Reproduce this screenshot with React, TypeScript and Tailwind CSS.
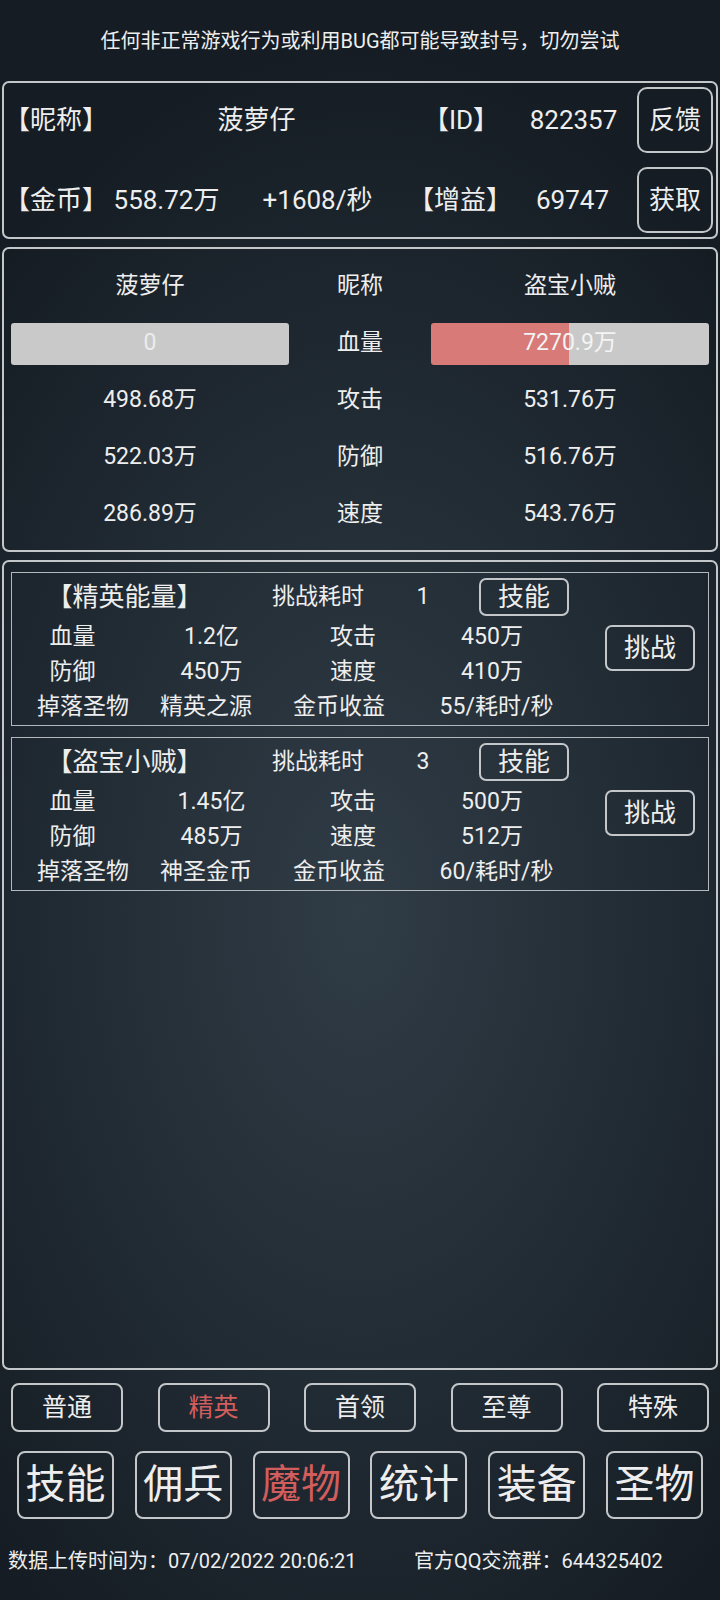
import { Fragment } from 'react'
import type React from 'react'

// 枠線の色
const line = 'border-[#c3c7ca]'

const TopCell = ({ w, children }: { w: string; children: React.ReactNode }) => (
  <span className={`${w} shrink-0 text-center whitespace-nowrap`}>{children}</span>
)

type Monster = {
  name: string
  cost: string
  hp: string
  atk: string
  def: string
  spd: string
  drop: string
  income: string
}

const monsters: Monster[] = [
  { name: '【精英能量】', cost: '1', hp: '1.2亿', atk: '450万', def: '450万', spd: '410万', drop: '精英之源', income: '55/耗时/秒' },
  { name: '【盗宝小贼】', cost: '3', hp: '1.45亿', atk: '500万', def: '485万', spd: '512万', drop: '神圣金币', income: '60/耗时/秒' },
]

const MonsterCard = ({ m }: { m: Monster }) => (
  <div className="h-[154px] border-[1.5px] border-[#b3b8bc]">
    {/* 1行目：名前・耗时・技能 */}
    <div className="flex items-center h-[38px] mt-[5px] whitespace-nowrap">
      <span className="w-[225px] text-center text-[26px]">{m.name}</span>
      <span className="w-[162px] text-center text-[23px]">挑战耗时</span>
      <span className="w-[48px] text-center text-[23px]">{m.cost}</span>
      <button
        type="button"
        className={`ml-[32px] w-[90px] h-[38px] border-2 ${line} rounded-[7px] text-[26px] leading-none flex items-center justify-center`}
      >
        技能
      </button>
    </div>
    <div className="flex items-start mt-[4px]">
      <div className="w-[561px] text-[23px] whitespace-nowrap">
        <div className="flex items-center h-[35px]">
          <span className="w-[121px] text-center">血量</span>
          <span className="w-[157px] text-center">{m.hp}</span>
          <span className="w-[126px] text-center">攻击</span>
          <span className="w-[152px] text-center">{m.atk}</span>
        </div>
        <div className="flex items-center h-[35px]">
          <span className="w-[121px] text-center">防御</span>
          <span className="w-[157px] text-center">{m.def}</span>
          <span className="w-[126px] text-center">速度</span>
          <span className="w-[152px] text-center">{m.spd}</span>
        </div>
        <div className="flex items-center h-[35px]">
          <span className="w-[142px] text-center">掉落圣物</span>
          <span className="w-[104px] text-center">{m.drop}</span>
          <span className="w-[162px] text-center">金币收益</span>
          <span className="w-[153px] text-center">{m.income}</span>
        </div>
      </div>
      <button
        type="button"
        className={`mt-[5px] ml-[32px] w-[90px] h-[46px] border-2 ${line} rounded-[7px] text-[26px] leading-none flex items-center justify-center`}
      >
        挑战
      </button>
    </div>
  </div>
)

const stats = [
  { left: '498.68万', label: '攻击', right: '531.76万' },
  { left: '522.03万', label: '防御', right: '516.76万' },
  { left: '286.89万', label: '速度', right: '543.76万' },
]

const modes = ['普通', '精英', '首领', '至尊', '特殊']
const menus = ['技能', '佣兵', '魔物', '统计', '装备', '圣物']

export default function App() {
  return (
    <main className="w-[720px] min-h-[1600px] flex flex-col text-[#eeeeee] font-['Roboto','Noto_Sans_CJK_SC',sans-serif] bg-[radial-gradient(ellipse_75%_55%_at_50%_57%,#303c46_0%,#222c35_52%,#151c23_100%)]">
      <div className="h-[81px] flex items-center justify-center text-[20px]">
        任何非正常游戏行为或利用BUG都可能导致封号，切勿尝试
      </div>

      {/* プレイヤー情報 */}
      <section className={`mx-[2px] h-[158px] border-2 ${line} rounded-[7px] flex flex-col gap-[14px] pt-[4px] text-[26px]`}>
        <div className="flex items-center h-[66px]">
          <TopCell w="w-[100px]">【昵称】</TopCell>
          <TopCell w="w-[305px]">菠萝仔</TopCell>
          <TopCell w="w-[104px]">【ID】</TopCell>
          <TopCell w="w-[121px]">822357</TopCell>
          <button
            type="button"
            className={`ml-[3px] w-[76px] h-[66px] border-2 ${line} rounded-[10px] flex items-center justify-center leading-none`}
          >
            反馈
          </button>
        </div>
        <div className="flex items-center h-[66px]">
          <TopCell w="w-[100px]">【金币】</TopCell>
          <TopCell w="w-[125px]">558.72万</TopCell>
          <TopCell w="w-[177px]">+1608/秒</TopCell>
          <TopCell w="w-[108px]">【增益】</TopCell>
          <TopCell w="w-[117px]">69747</TopCell>
          <button
            type="button"
            className={`ml-[6px] w-[76px] h-[66px] border-2 ${line} rounded-[10px] flex items-center justify-center leading-none`}
          >
            获取
          </button>
        </div>
      </section>

      {/* 対戦ステータス */}
      <section className={`mt-[8px] mx-[2px] h-[305px] border-2 ${line} rounded-[7px] px-[7px] pt-[9px]`}>
        <div className="grid grid-cols-[278px_142px_278px] auto-rows-[57px] items-center text-center text-[23px] whitespace-nowrap">
          <span>菠萝仔</span>
          <span>昵称</span>
          <span>盗宝小贼</span>

          <div className="h-[42px] rounded-[3px] bg-[#c9c9c9] flex items-center justify-center text-[#ececec]">0</div>
          <span>血量</span>
          <div className="h-[42px] rounded-[3px] bg-[linear-gradient(to_right,#d77a78_49.6%,#c9c9c9_49.6%)] flex items-center justify-center text-[#f4f4f4]">
            7270.9万
          </div>

          {stats.map((s) => (
            <Fragment key={s.label}>
              <span>{s.left}</span>
              <span>{s.label}</span>
              <span>{s.right}</span>
            </Fragment>
          ))}
        </div>
      </section>

      {/* 魔物リスト */}
      <section className={`mt-[8px] mx-[2px] h-[810px] border-2 ${line} rounded-[7px] px-[7px] pt-[10px] flex flex-col gap-[11px]`}>
        {monsters.map((m) => (
          <MonsterCard key={m.name} m={m} />
        ))}
      </section>

      <div className="mt-[13px] px-[11px] flex justify-between">
        {modes.map((t) => (
          <button
            key={t}
            type="button"
            className={`w-[112px] h-[49px] border-2 ${line} rounded-[8px] text-[25px] leading-none flex items-center justify-center ${
              t === '精英' ? 'text-[#d25d5d]' : ''
            }`}
          >
            {t}
          </button>
        ))}
      </div>

      <div className="mt-[19px] px-[17px] flex justify-between">
        {menus.map((t) => (
          <button
            key={t}
            type="button"
            className={`w-[97px] h-[68px] border-2 ${line} rounded-[8px] text-[40px] leading-none flex items-center justify-center ${
              t === '魔物' ? 'text-[#d25d5d]' : ''
            }`}
          >
            {t}
          </button>
        ))}
      </div>

      <footer className="mt-[28px] px-[8px] flex items-center text-[20px] leading-[28px] whitespace-nowrap">
        <span className="w-[406px]">数据上传时间为：07/02/2022 20:06:21</span>
        <span>官方QQ交流群：644325402</span>
      </footer>
    </main>
  )
}
